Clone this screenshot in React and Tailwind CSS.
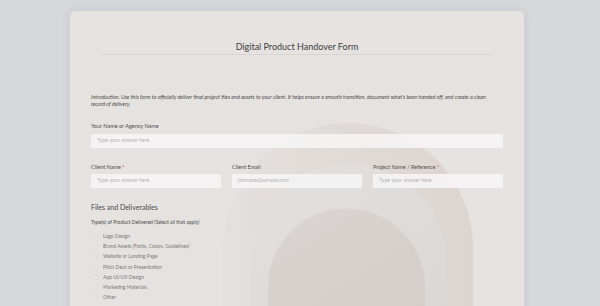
import React from "react";

const font = { fontFamily: "Lato, 'Noto Sans', sans-serif" };

const deliverables = [
  "Logo Design",
  "Brand Assets (Fonts, Colors, Guidelines)",
  "Website or Landing Page",
  "Pitch Deck or Presentation",
  "App UI/UX Design",
  "Marketing Materials",
  "Other",
];

// decorative arches behind the form
const Arches = () => (
  <svg
    className="absolute left-0 top-0 pointer-events-none"
    width="454"
    height="300"
    viewBox="0 0 454 300"
  >
    <defs>
      <linearGradient id="outer" x1="0" y1="0" x2="1" y2="0">
        <stop offset="0" stopColor="#e4e0dd" />
        <stop offset="1" stopColor="#dcd4cf" />
      </linearGradient>
      <linearGradient id="mid" x1="0" y1="0" x2="1" y2="1">
        <stop offset="0" stopColor="#e3e0de" />
        <stop offset="1" stopColor="#dbd7d5" />
      </linearGradient>
      <linearGradient id="inner" x1="0" y1="0" x2="1" y2="1">
        <stop offset="0" stopColor="#dad5d2" />
        <stop offset="1" stopColor="#d4cdca" />
      </linearGradient>
    </defs>
    <path d="M153 300 V237 A125 125 0 0 1 403 237 V300 Z" fill="url(#outer)" />
    <path d="M180 300 V251 A98.5 98.5 0 0 1 377 251 V300 Z" fill="url(#mid)" />
    <path d="M198 300 V276 A78.5 78.5 0 0 1 355 276 V300 Z" fill="url(#inner)" />
  </svg>
);

const Field = ({ label, placeholder, required }) => (
  <div className="flex flex-col">
    <label className="text-[5.5px] text-[#505050] leading-none mb-[4px]">
      {label}
      {required && <span className="text-red-500"> *</span>}
    </label>
    <div className="h-[14px] bg-[#f5f4f4]/90 rounded-[1px] flex items-center px-[6px] text-[5.3px] text-[#b4b2b2]">
      {placeholder}
    </div>
  </div>
);

export default function App() {
  return (
    <div className="w-full h-[306px] bg-[#d6d8db] overflow-hidden pt-[11px]" style={font}>
      <div className="relative ml-[70px] w-[454px] h-[320px] bg-[#e6e2e0] rounded-[5px] shadow-[0_0_12px_rgba(0,0,0,0.08)]">
        <Arches />
        <div className="relative">
          <div className="pt-[31px] px-[31px]">
            <h1 className="text-center text-[9px] font-normal text-[#404040] leading-none pb-[3px] border-b border-[#d9d5d3]">
              Digital Product Handover Form
            </h1>
          </div>
          <div className="px-[21px]">
            <p className="mt-[39px] text-[5.4px] italic text-[#4b4a4a] leading-[7px] pr-[10px]">
              Introduction. Use this form to officially deliver final project files and assets to your client. It helps ensure a smooth transition, document what's been handed off, and create a clean record of delivery.
            </p>
            <div className="mt-[16px]">
              <Field label="Your Name or Agency Name" placeholder="Type your answer here" />
            </div>
            <div className="mt-[17px] grid grid-cols-3 gap-[11px]">
              <Field label="Client Name" placeholder="Type your answer here" required />
              <Field label="Client Email" placeholder="johndoe@sample.com" />
              <Field label="Project Name / Reference" placeholder="Type your answer here" required />
            </div>
            <h2 className="mt-[16px] text-[7px] text-[#4b4a4a] leading-none">Files and Deliverables</h2>
            <div className="mt-[9px] text-[5px] text-[#4b4a4a] leading-none">
              Type(s) of Product Delivered (Select all that apply)
            </div>
            <div className="mt-[6px] flex flex-col">
              {deliverables.map((d) => (
                <div key={d} className="flex items-center h-[10.3px] pl-[2px]">
                  <span className="w-[5px] h-[5px] bg-[#ebe9e8] border border-[#dcd9d7] rounded-[1px]" />
                  <span className="ml-[5px] text-[5px] text-[#7b7978] leading-none">{d}</span>
                </div>
              ))}
            </div>
          </div>
        </div>
      </div>
    </div>
  );
}
